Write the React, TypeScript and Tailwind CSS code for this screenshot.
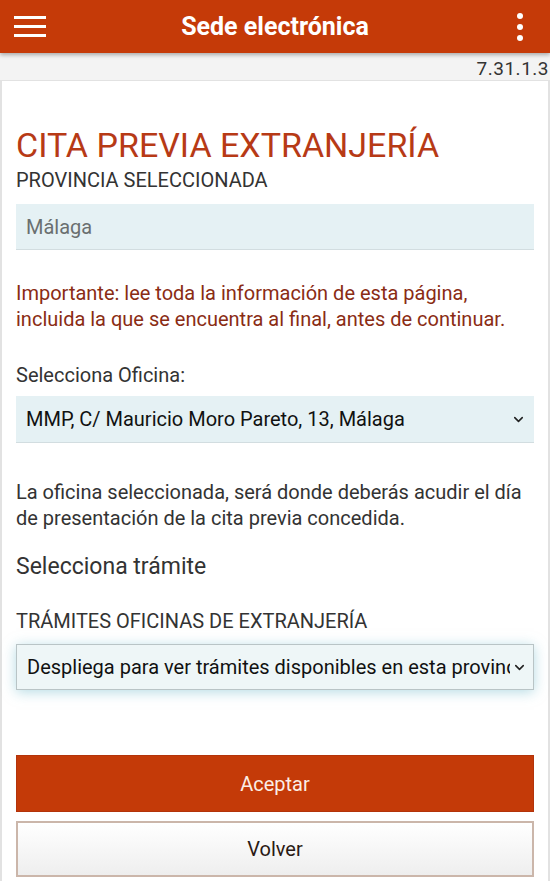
import { ChevronDown } from 'lucide-react';

const font = { fontFamily: 'Roboto, "Noto Sans", Arial, sans-serif' };

function Header() {
  return (
    <header className="relative z-10 h-[53px] bg-[#c53a08] grid grid-cols-[60px_1fr_60px] items-center shadow-[0_2px_4px_rgba(0,0,0,0.3)]">
      <div className="pl-[14px]">
        <div className="flex flex-col gap-[6px] w-[32px]">
          <span className="block h-[3px] bg-white" />
          <span className="block h-[3px] bg-white" />
          <span className="block h-[3px] bg-white" />
        </div>
      </div>
      <h1 className="text-center text-white text-[25px] font-bold">Sede electrónica</h1>
      <div className="flex justify-end pr-[27px]">
        <div className="flex flex-col gap-[5px]">
          <span className="block w-[6px] h-[6px] rounded-full bg-white" />
          <span className="block w-[6px] h-[6px] rounded-full bg-white" />
          <span className="block w-[6px] h-[6px] rounded-full bg-white" />
        </div>
      </div>
    </header>
  );
}

export default function App() {
  return (
    <div className="w-[550px] h-[881px] overflow-hidden bg-[#f3f3f3]" style={font}>
      <Header />
      <div className="h-[27px] flex items-end justify-end pr-[1px] text-[19px] leading-[22px] text-[#333] tracking-[0.5px]">
        7.31.1.3
      </div>
      <main className="bg-white border-l-2 border-r-2 border-t border-[#e2e2e2] px-[14px] pt-[44px] h-[801px]">
        <h2 className="text-[34px] leading-[40px] text-[#b73a16]">CITA PREVIA EXTRANJERÍA</h2>
        <p className="text-[20px] leading-[20px] text-[#333] mt-[5px]">PROVINCIA SELECCIONADA</p>
        <div className="mt-[14px] h-[46px] bg-[#e5f1f4] border-b border-[#d2dde0] flex items-center px-[10px] text-[20px] text-[#6a6f70]">
          Málaga
        </div>
        <p className="mt-[30px] text-[20px] leading-[26px] text-[#8a2c14]">
          Importante: lee toda la información de esta página, incluida la que se encuentra al final, antes de continuar.
        </p>
        <p className="mt-[31px] text-[20px] leading-[24px] text-[#333]">Selecciona Oficina:</p>
        <div className="mt-[9px] h-[47px] bg-[#e5f1f4] border-b border-[#d2dde0] flex items-center pl-[10px] pr-[8px] text-[20px] text-[#111]">
          <span className="flex-1">MMP, C/ Mauricio Moro Pareto, 13, Málaga</span>
          <ChevronDown size={15} strokeWidth={2.5} className="text-[#222]" />
        </div>
        <p className="mt-[36px] text-[20px] leading-[26px] text-[#333]">
          La oficina seleccionada, será donde deberás acudir el día de presentación de la cita previa concedida.
        </p>
        <p className="mt-[22px] text-[23px] leading-[28px] text-[#333]">Selecciona trámite</p>
        <p className="mt-[30px] text-[20px] leading-[20px] text-[#333]">TRÁMITES OFICINAS DE EXTRANJERÍA</p>
        <div className="mt-[13px] h-[46px] bg-[#eef6f7] border border-[#b9c4c6] shadow-[0_2px_12px_rgba(120,190,205,0.55)] flex items-center pl-[10px] pr-[6px] text-[20px] text-[#111]">
          <span className="flex-1 whitespace-nowrap overflow-hidden">Despliega para ver trámites disponibles en esta provincia</span>
          <ChevronDown size={15} strokeWidth={2.5} className="text-[#222] ml-[2px]" />
        </div>
        <button className="mt-[65px] w-full h-[57px] bg-[#c43a08] text-[#fbeee6] text-[20px] border border-[#b3330a]">
          Aceptar
        </button>
        <button className="mt-[9px] w-full h-[56px] bg-gradient-to-b from-white to-[#eeeeee] text-[#2a1a14] text-[20px] border-2 border-[#cbb6aa]">
          Volver
        </button>
      </main>
    </div>
  );
}
